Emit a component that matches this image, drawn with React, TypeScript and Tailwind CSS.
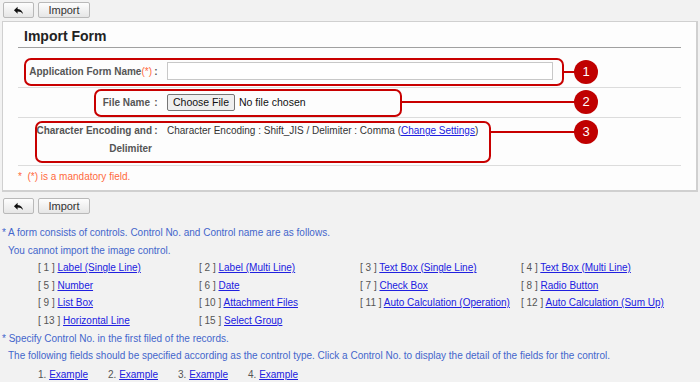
import React from "react";

const BackIcon = () => (
  <svg width="11" height="10" viewBox="0 0 24 22" className="block">
    <path d="M10 9V4L2 11.5 10 19v-4.6c5.5 0 9.2 1.6 12 5.6-1.1-5.6-4.4-10.2-12-11z" fill="#111" />
  </svg>
);

const Toolbar = () => (
  <div className="flex gap-[4px] pl-[3px]">
    <button className="w-[31px] h-[16px] flex items-center justify-center border border-[#b9b9b9] rounded-[2px] bg-gradient-to-b from-[#fdfdfd] to-[#e6e6e6]">
      <BackIcon />
    </button>
    <button className="w-[52px] h-[16px] flex items-center justify-center border border-[#b9b9b9] rounded-[2px] bg-gradient-to-b from-[#fdfdfd] to-[#e6e6e6] text-[11px] text-[#333] leading-none">
      Import
    </button>
  </div>
);

const Link = ({ children }: { children: React.ReactNode }) => (
  <a href="#" className="text-[#2020e0] underline">
    {children}
  </a>
);

const controls: [string, string][] = [
  ["1", "Label (Single Line)"],
  ["2", "Label (Multi Line)"],
  ["3", "Text Box (Single Line)"],
  ["4", "Text Box (Multi Line)"],
  ["5", "Number"],
  ["6", "Date"],
  ["7", "Check Box"],
  ["8", "Radio Button"],
  ["9", "List Box"],
  ["10", "Attachment Files"],
  ["11", "Auto Calculation (Operation)"],
  ["12", "Auto Calculation (Sum Up)"],
  ["13", "Horizontal Line"],
  ["15", "Select Group"],
];

const Circle = ({ n, top }: { n: string; top: number }) => (
  <div
    className="absolute left-[571px] w-[24px] h-[24px] rounded-full bg-[#c00000] text-white text-[13px] flex items-center justify-center"
    style={{ top }}
  >
    {n}
  </div>
);

export default function App() {
  return (
    <div
      className="w-[700px] h-[382px] bg-[#f2f2f2] text-[10px] text-[#333] pt-[2px] overflow-hidden"
      style={{ fontFamily: '"Liberation Sans", Arial, sans-serif' }}
    >
      <Toolbar />
      <div className="mx-[2px] mt-[3px] bg-[#fdfdfd] border border-[#d0d0d0] border-r-2 border-b-2 relative px-[15px] pb-[5px]">
        <div className="border-b border-[#a0a0a0] pl-[6px] pt-[5px] h-[26px]">
          <span className="text-[14px] font-bold text-[#222] leading-[18px]">Import Form</span>
        </div>
        {/* Row 1 */}
        <div className="flex items-center border-b border-[#dcdcdc] pt-[14px] pb-[7px]">
          <div className="w-[142px] flex justify-end font-bold text-[#555] whitespace-nowrap">
            <span>
              Application Form Name<span className="text-[#ff6a3d] font-normal">(*)</span>
            </span>
            <span className="w-[8px] text-center">:</span>
          </div>
          <div className="pl-[7px]">
            <input className="w-[386px] h-[18px] border border-[#c8c8c8] bg-white block" />
          </div>
        </div>
        {/* Row 2 */}
        <div className="flex items-center border-b border-[#dcdcdc] pt-[6px] pb-[6px]">
          <div className="w-[142px] flex justify-end font-bold text-[#555] whitespace-nowrap">
            <span>File Name</span>
            <span className="w-[8px] text-center ml-[2px]">:</span>
          </div>
          <div className="pl-[7px] flex items-center text-[10.5px] whitespace-nowrap">
            <span className="h-[17px] px-[5px] flex items-center border border-[#767676] rounded-[2px] bg-[#efefef] text-[#111]">
              Choose File
            </span>
            <span className="ml-[4px] text-[#111]">No file chosen</span>
          </div>
        </div>
        {/* Row 3 */}
        <div className="flex items-start border-b border-[#dcdcdc] pt-[4px] pb-[7px] leading-[18px]">
          <div className="w-[142px] flex justify-end font-bold text-[#555]">
            <span className="text-right w-[118px]">Character Encoding and Delimiter</span>
            <span className="w-[8px] text-center">:</span>
          </div>
          <div className="pl-[7px] whitespace-nowrap">
            Character Encoding : Shift_JIS / Delimiter : Comma (<Link>Change Settings</Link>)
          </div>
        </div>
        <div className="pt-[3px] text-[#ff6a3d] leading-[16px]">
          * &nbsp;(*) is a mandatory field.
        </div>

        {/* Callouts */}
        <div className="absolute left-[21px] top-[36px] w-[540px] h-[28px] border-2 border-[#c80000] rounded-[7px]" />
        <div className="absolute left-[91px] top-[67px] w-[308px] h-[28px] border-2 border-[#c80000] rounded-[7px]" />
        <div className="absolute left-[32px] top-[99px] w-[456px] h-[42px] border-2 border-[#c80000] rounded-[7px]" />
        <div className="absolute left-[560px] top-[49px] w-[14px] h-[2px] bg-[#c80000]" />
        <div className="absolute left-[398px] top-[79px] w-[176px] h-[2px] bg-[#c80000]" />
        <div className="absolute left-[487px] top-[109px] w-[87px] h-[2px] bg-[#c80000]" />
        <Circle n="1" top={38} />
        <Circle n="2" top={68} />
        <Circle n="3" top={98} />
      </div>
      <div className="mt-[6px]">
        <Toolbar />
      </div>
      <div className="mt-[10px] text-[#4466cc] leading-[17.6px] whitespace-nowrap">
        <div className="pl-[2px]">* A form consists of controls. Control No. and Control name are as follows.</div>
        <div className="pl-[8px]">You cannot import the image control.</div>
        <div className="grid grid-cols-[161px_161px_161px_161px] pl-[38px] text-[#555]">
          {controls.map(([n, name]) => (
            <div key={n}>
              [ {n} ] <Link>{name}</Link>
            </div>
          ))}
        </div>
        <div className="pl-[2px]">* Specify Control No. in the first filed of the records.</div>
        <div className="pl-[8px]">
          The following fields should be specified according as the control type. Click a Control No. to display the detail of the fields for the control.
        </div>
        <div className="flex pl-[38px] text-[#555] mt-[1px]">
          {["1", "2", "3", "4"].map((n) => (
            <div key={n} className="w-[70px]">
              {n}. <Link>Example</Link>
            </div>
          ))}
        </div>
      </div>
    </div>
  );
}
